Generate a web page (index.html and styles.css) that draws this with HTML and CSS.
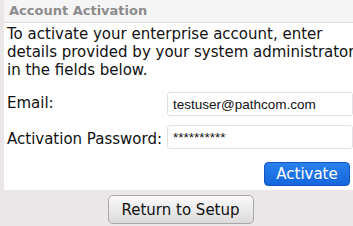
FILE: index.html
```html
<!DOCTYPE html>
<html lang="en">

<head>
    <meta charset="UTF-8">
    <meta name="viewport" content="width=device-width, initial-scale=1.0">
    <title>Account Activation</title>
    <link rel="stylesheet" href="styles.css">
</head>

<body>
    <div class="painel">
        <h2 class="titulo">Account Activation</h2>
        <p class="intro">To activate your enterprise account, enter<br>details provided by your system administrator<br>in the fields below.</p>
        <div class="campos">
            <label for="email">Email:</label>
            <input type="text" id="email" value="testuser@pathcom.com">
            <label for="senha" class="baixo">Activation Password:</label>
            <input type="text" id="senha" value="**********">
        </div>
        <div class="acoes">
            <button class="ativar">Activate</button>
        </div>
    </div>
    <div class="rodape">
        <button class="voltar">Return to Setup</button>
    </div>
</body>

</html>
```

FILE: styles.css
```css
body {
    margin: 0;
    width: 353px;
    height: 226px;
    overflow: hidden;
    background-color: #ebe7e9;
    font-family: "DejaVu Sans", sans-serif;
    color: #111;
}

.painel {
    margin-left: 4px;
    height: 190px;
    background-color: #fff;
    display: flex;
    flex-direction: column;
    overflow: hidden;
}

.titulo {
    margin: 0;
    height: 23px;
    padding: 3px 0 0 5px;
    box-sizing: border-box;
    font-size: 13px;
    font-weight: bold;
    color: #8c8c8c;
    background-color: #f6f5f5;
    border-bottom: 1px solid #dedcdc;
}

.intro {
    margin: 2px 0 0 3px;
    font-size: 15px;
    line-height: 18px;
    white-space: nowrap;
}

.campos {
    display: grid;
    grid-template-columns: 160px 1fr;
    row-gap: 9px;
    align-items: center;
    margin-top: 13px;
    padding-left: 3px;
}

.campos label {
    font-size: 15px;
    margin-bottom: 2px;
}

.campos label.baixo {
    margin: 4px 0 0;
}

.campos input {
    width: 186px;
    height: 24px;
    box-sizing: border-box;
    border: 1px solid #e2e0e2;
    border-radius: 3px;
    padding: 0 0 0 5px;
    font-family: "Liberation Sans", sans-serif;
    font-size: 13.5px;
    color: #111;
    background: #fff;
}

.acoes {
    display: flex;
    justify-content: flex-end;
    padding: 13px 3px 0 0;
}

.ativar {
    width: 86px;
    height: 24px;
    border: 1px solid #1256c0;
    border-radius: 4px;
    background: linear-gradient(#2a80ee, #1466dc);
    color: #fff;
    font-family: "DejaVu Sans", sans-serif;
    font-size: 15px;
    padding: 0;
}

.rodape {
    display: flex;
    justify-content: center;
    padding: 5px 0 0 8px;
}

.voltar {
    width: 146px;
    height: 29px;
    border: 1px solid #a9a7a8;
    border-radius: 5px;
    background: linear-gradient(#fafafa, #dcdadb);
    color: #111;
    font-family: "DejaVu Sans", sans-serif;
    font-size: 15px;
    padding: 0;
}
```
